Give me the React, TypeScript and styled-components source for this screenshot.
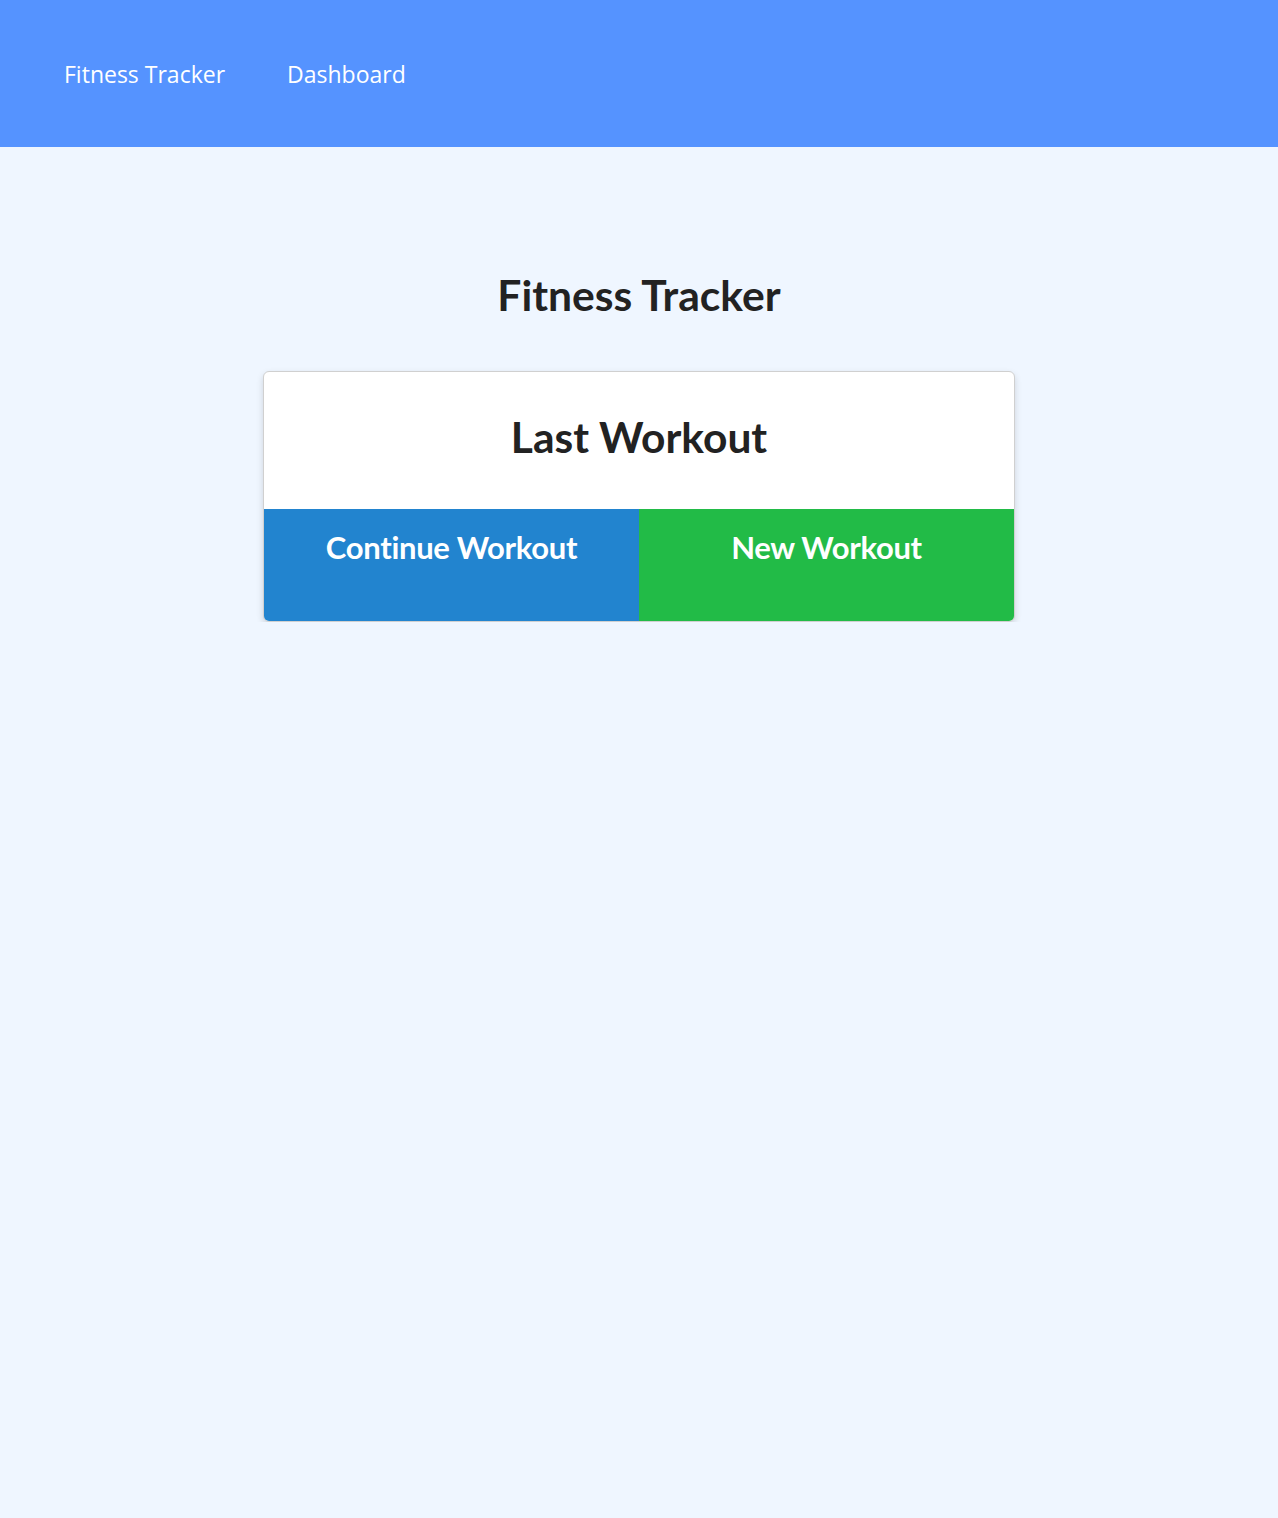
import React from "react";
import styled, { createGlobalStyle } from "styled-components";

const Global = createGlobalStyle`
  html, body { margin: 0; padding: 0; background: #eff6ff; }
  body { font-family: "Open Sans", "Noto Sans", sans-serif; }
`;

const Nav = styled.nav`
  height: 147px;
  background: #5593ff;
  display: flex;
  align-items: center;
  gap: 62px;
  padding: 0 64px;
  box-sizing: border-box;
`;

const NavLink = styled.a`
  color: #ffffff;
  font-family: "Open Sans", sans-serif;
  font-size: 23px;
  text-decoration: none;
`;

const Main = styled.main`
  display: flex;
  flex-direction: column;
  align-items: center;
  padding-top: 120px;
`;

const Title = styled.h1`
  margin: 0 0 48px;
  font-family: Lato, sans-serif;
  font-weight: 700;
  font-size: 42.6px;
  line-height: 56px;
  color: #222222;
`;

const Card = styled.div`
  width: 752px;
  box-sizing: border-box;
  background: #ffffff;
  border: 1px solid #d0d0d0;
  border-radius: 6px;
  overflow: hidden;
  box-shadow: 0 3px 7px rgba(0, 0, 0, 0.14);
`;

const CardHeader = styled.div`
  height: 137px;
  box-sizing: border-box;
  padding-bottom: 8px;
  display: flex;
  align-items: center;
  justify-content: center;
`;

const CardTitle = styled.h2`
  margin: 0;
  font-family: Lato, sans-serif;
  font-weight: 700;
  font-size: 42.5px;
  color: #222222;
`;

const Actions = styled.div`
  display: grid;
  grid-template-columns: 1fr 1fr;
  height: 112px;
`;

const ActionButton = styled.button<{ $bg: string }>`
  border: none;
  margin: 0;
  background: ${(p) => p.$bg};
  color: #ffffff;
  font-family: Lato, sans-serif;
  font-weight: 700;
  font-size: 31px;
  letter-spacing: -0.3px;
  display: flex;
  justify-content: center;
  align-items: flex-start;
  padding-top: 19px;
  cursor: pointer;
`;

export default function App() {
  return (
    <>
      <Global />
      <Nav>
        <NavLink href="#">Fitness Tracker</NavLink>
        <NavLink href="#">Dashboard</NavLink>
      </Nav>
      <Main>
        <Title>Fitness Tracker</Title>
        <Card>
          <CardHeader>
            <CardTitle>Last Workout</CardTitle>
          </CardHeader>
          <Actions>
            <ActionButton $bg="#2284cf">Continue Workout</ActionButton>
            <ActionButton $bg="#22bb47">New Workout</ActionButton>
          </Actions>
        </Card>
      </Main>
    </>
  );
}
